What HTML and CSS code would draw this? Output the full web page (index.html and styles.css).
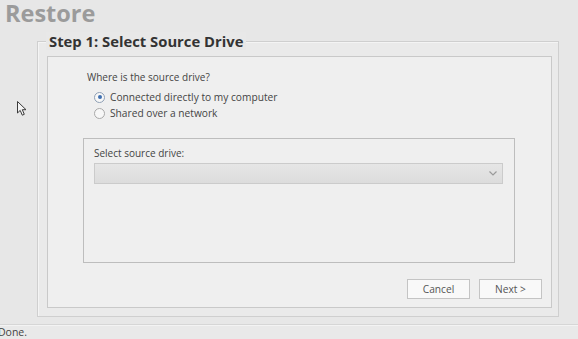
FILE: index.html
```html
<!DOCTYPE html>
<html>
<head>
<meta charset="utf-8">
<link rel="stylesheet" href="styles.css">
</head>
<body>
<div class="page">
  <div class="title">Restore</div>
  <div class="group">
    <div class="legend">Step 1: Select Source Drive</div>
    <div class="panel">
      <div class="question">Where is the source drive?</div>
      <div class="options">
        <label class="option"><span class="radio checked"></span>Connected directly to my computer</label>
        <label class="option"><span class="radio"></span>Shared over a network</label>
      </div>
      <div class="drivebox">
        <div class="drivelabel">Select source drive:</div>
        <div class="combo">
          <svg class="chev" width="8" height="5" viewBox="0 0 8 5"><path d="M0.5 0.5 L4 4 L7.5 0.5" fill="none" stroke="#9a9a9a" stroke-width="1.2"/></svg>
        </div>
      </div>
      <div class="buttons">
        <div class="btn">Cancel</div>
        <div class="btn">Next &gt;</div>
      </div>
    </div>
  </div>
  <div class="status"><span class="status-text">Done.</span></div>
  <svg class="cursor" width="11" height="16" viewBox="0 0 11 16"><path d="M0.5 0.5 L0.5 12 L3.2 9.4 L5.3 14.2 L7.3 13.3 L5.3 8.7 L9 8.7 Z" fill="#f4f4f4" stroke="#3a3a3a" stroke-width="1" stroke-linejoin="round"/></svg>
</div>
</body>
</html>
```
FILE: styles.css
```css
html, body {
  margin: 0;
  padding: 0;
}
body {
  background: #e7e7e7;
  font-family: "Open Sans", "DejaVu Sans", sans-serif;
  color: #444;
  font-size: 10px;
}
.page {
  position: relative;
  width: 578px;
  height: 339px;
  overflow: hidden;
  display: flex;
  flex-direction: column;
}
.title {
  flex: none;
  height: 41px;
  padding-left: 5px;
  box-sizing: border-box;
  font-weight: 700;
  font-size: 23.5px;
  line-height: 27px;
  color: #9b9b9b;
}
.group {
  flex: none;
  position: relative;
  margin-left: 37px;
  border: 1px solid #cfcfcf;
  box-shadow: inset 1px 1px 0 #f4f4f4;
  background: #eaeaea;
  padding: 14px 6px 8px 9px;
  box-sizing: border-box;
  width: 522px;
  height: 276px;
}
.legend {
  position: absolute;
  top: -10px;
  left: 8px;
  padding: 0 3px;
  background: #e8e8e8;
  font-weight: 700;
  font-size: 14.8px;
  line-height: 18px;
  color: #333;
}
.panel {
  height: 252px;
  box-sizing: border-box;
  border: 1px solid #c9c9c9;
  background: #efefef;
  padding: 12px 0 0 35px;
  display: flex;
  flex-direction: column;
}
.question {
  margin-left: 4px;
  line-height: 16px;
}
.options {
  margin-top: 4px;
  margin-left: 11px;
  display: flex;
  flex-direction: column;
}
.option {
  display: flex;
  align-items: center;
  height: 16px;
  font-size: 10.2px;
}
.radio {
  width: 9px;
  height: 9px;
  border-radius: 50%;
  border: 1px solid #a9a9a9;
  background: #f7f7f7;
  margin-right: 5px;
  display: flex;
  align-items: center;
  justify-content: center;
}
.radio.checked {
  border-color: #8e9fb5;
}
.radio.checked::after {
  content: "";
  width: 4px;
  height: 4px;
  border-radius: 50%;
  background: #3f6fb0;
}
.drivebox {
  margin-top: 17px;
  width: 432px;
  height: 125px;
  box-sizing: border-box;
  border: 1px solid #bdbdbd;
  padding: 6px 0 0 10px;
}
.drivelabel {
  line-height: 16px;
}
.combo {
  margin-top: 2px;
  width: 409px;
  height: 21px;
  box-sizing: border-box;
  border: 1px solid #cbcbcb;
  background: linear-gradient(#e6e6e6, #dcdcdc);
  display: flex;
  align-items: center;
  justify-content: flex-end;
  padding-right: 5px;
}
.buttons {
  margin-top: 16px;
  margin-right: 9px;
  display: flex;
  justify-content: flex-end;
  gap: 9px;
}
.btn {
  width: 63px;
  height: 20px;
  box-sizing: border-box;
  border: 1px solid #c4c4c4;
  background: #f9f9f9;
  display: flex;
  align-items: center;
  justify-content: center;
  color: #555;
  font-size: 10.2px;
}
.status {
  margin-top: 7px;
  border-top: 1px solid #d6d6d6;
  box-shadow: inset 0 1px 0 #f3f3f3;
  flex: 1;
  background: #e9e9e9;
  line-height: 15px;
  color: #444;
  font-size: 10.5px;
}
.status-text {
  margin-left: -2px;
}
.cursor {
  position: absolute;
  left: 17px;
  top: 101px;
}
```
